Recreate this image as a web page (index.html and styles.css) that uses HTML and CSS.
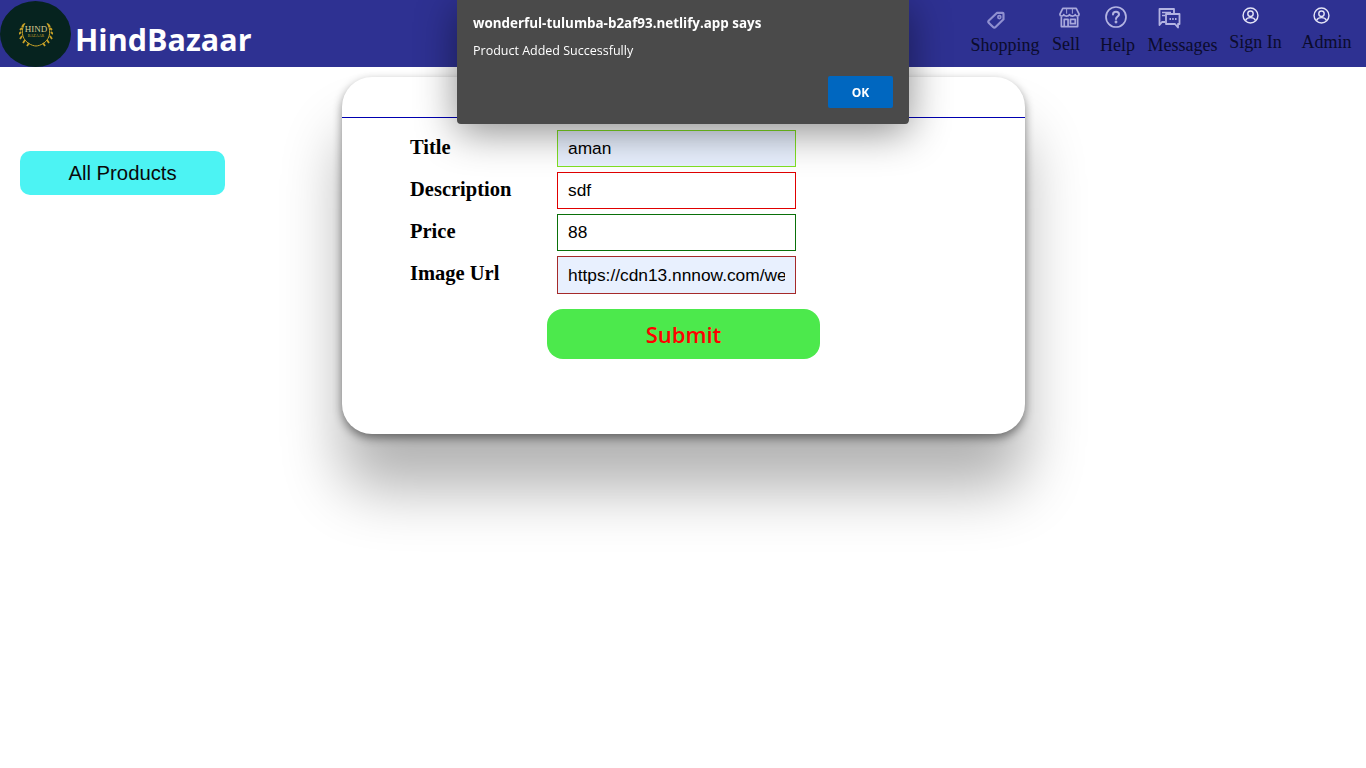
FILE: index.html
```html
<!DOCTYPE html>
<html lang="en">
  <head>
    <meta charset="UTF-8" />
    <meta name="viewport" content="width=device-width, initial-scale=1.0" />
    <title>HindBazaar</title>
    <link rel="stylesheet" href="styles.css">
  </head>
  <body>
    <header class="topbar">
      <a class="brand" href="#">
        <span class="brand-logo">
          <svg class="laurel" viewBox="0 0 34 26" width="34" height="26" fill="none" stroke="#c9a227">
            <path d="M6 2C2 8 2 17 9 22C12 24 15 25 17 25C19 25 22 24 25 22C32 17 32 8 28 2" stroke-width="1" />
            <path d="M5 3L3 6M3 7L1 9M2 11L0 13M3 15L1 18M6 19L4 22M10 22L8 25M29 3L31 6M31 7L33 9M32 11L34 13M31 15L33 18M28 19L30 22M24 22L26 25" stroke-width="1.8" />
            <text class="laurel-big" x="17" y="11" text-anchor="middle">HIND</text>
            <text class="laurel-small" x="17" y="16" text-anchor="middle">BAZAAR</text>
          </svg>
        </span>
        <span class="brand-name">HindBazaar</span>
      </a>
      <nav class="nav">
        <a class="nav-item nav-shopping" href="#">
          <svg viewBox="0 0 24 24" width="20" height="20" fill="none" stroke="currentColor" stroke-width="2.6" stroke-linejoin="round">
            <path d="M13 3.5H20Q21 3.5 21 4.5V11L11.5 20.5Q10 22 8.5 20.5L3.5 15.5Q2 14 3.5 12.5Z" />
            <circle cx="16" cy="8.5" r="1.8" stroke-width="2" />
          </svg>
          <span>Shopping</span>
        </a>
        <a class="nav-item nav-sell" href="#">
          <svg viewBox="0 0 24 24" width="23" height="23" fill="none" stroke="currentColor" stroke-width="1.8" stroke-linejoin="round">
            <path d="M5 2.5H19L22 8.5C22 11 18.5 11 18 9C17.5 11 13 11 12 9C11 11 6.5 11 6 9C5.5 11 2 11 2 8.5Z" />
            <path d="M3.5 11V21.5H20.5V11" />
            <path d="M6.5 21.5V14H10.5V21.5M13 14H18V18.5H13Z" />
            <path d="M9 3V8M15 3V8" stroke-width="1" />
          </svg>
          <span>Sell</span>
        </a>
        <a class="nav-item nav-help" href="#">
          <svg viewBox="0 0 24 24" width="24" height="24" fill="none" stroke="currentColor" stroke-width="1.7" stroke-linecap="round">
            <circle cx="12" cy="12" r="10" />
            <path d="M9 9.5C9 7.5 10.5 6.8 12 6.8C13.7 6.8 15 7.8 15 9.4C15 11.5 12 11.6 12 14" stroke-width="2" />
            <circle cx="12" cy="17" r="0.6" />
          </svg>
          <span>Help</span>
        </a>
        <a class="nav-item nav-messages" href="#">
          <svg viewBox="0 0 24 22" width="24" height="22" fill="none" stroke="currentColor" stroke-width="1.8" stroke-linejoin="round">
            <path d="M8 15H5L2.5 18V2H17V6" />
            <path d="M5 5.5H14M5 8.5H8" stroke-width="1.4" />
            <path d="M9 7H22.5V17H21V20.5L18 17H9Z" />
            <path d="M12.5 12H14M15.2 12H16.7M18 12H19.5" stroke-width="2" />
          </svg>
          <span>Messages</span>
        </a>
        <a class="nav-item nav-signin" href="#">
          <svg viewBox="0 0 24 24" width="17" height="17" fill="none" stroke="currentColor" stroke-width="2">
            <circle cx="12" cy="12" r="10.5" />
            <circle cx="12" cy="9.5" r="3.8" />
            <path d="M5 19C6.5 15.5 9 15 12 15C15 15 17.5 15.5 19 19" />
          </svg>
          <span>Sign In</span>
        </a>
        <a class="nav-item nav-admin" href="#">
          <svg viewBox="0 0 24 24" width="17" height="17" fill="none" stroke="currentColor" stroke-width="2">
            <circle cx="12" cy="12" r="10.5" />
            <circle cx="12" cy="9.5" r="3.8" />
            <path d="M5 19C6.5 15.5 9 15 12 15C15 15 17.5 15.5 19 19" />
          </svg>
          <span>Admin</span>
        </a>
      </nav>
    </header>

    <main class="page">
      <aside class="side">
        <button type="button" class="side-btn">All Products</button>
      </aside>
      <section class="card">
        <hr class="card-line" />
        <form class="product-form" action="">
          <label class="form-label" for="title">Title</label>
          <input class="field field-title" id="title" type="text" value="aman" />
          <label class="form-label" for="description">Description</label>
          <input class="field field-description" id="description" type="text" value="sdf" />
          <label class="form-label" for="price">Price</label>
          <input class="field field-price" id="price" type="text" value="88" />
          <label class="form-label" for="image">Image Url</label>
          <input class="field field-image" id="image" type="text" value="https://cdn13.nnnow.com/web-images/large" />
          <button type="button" class="submit-btn">Submit</button>
        </form>
      </section>
    </main>

    <div class="alert" role="alertdialog">
      <p class="alert-title">wonderful-tulumba-b2af93.netlify.app says</p>
      <p class="alert-text">Product Added Successfully</p>
      <div class="alert-actions">
        <button type="button" class="alert-ok">OK</button>
      </div>
    </div>
  </body>
</html>
```

FILE: styles.css
```css
* {
  box-sizing: border-box;
}
body {
  margin: 0;
  height: 768px;
  overflow: hidden;
  background-color: white;
  font-family: "Liberation Sans", Arial, sans-serif;
}
a {
  color: inherit;
  text-decoration: none;
}

/* header */
.topbar {
  display: flex;
  justify-content: space-between;
  height: 67px;
  padding-right: 14px;
  background-color: #2e3192;
}
.brand {
  display: flex;
  align-items: center;
  gap: 4px;
}
.brand-logo {
  display: flex;
  align-items: center;
  justify-content: center;
  width: 71px;
  height: 66px;
  margin-top: 1px;
  border-radius: 50%;
  background-color: #06231f;
}
.laurel-big {
  font-family: "Liberation Serif", serif;
  font-size: 9px;
  fill: #d8c890;
  stroke: none;
}
.laurel-small {
  font-family: "Liberation Serif", serif;
  font-size: 4px;
  fill: #c9a227;
  stroke: none;
}
.brand-name {
  margin-top: 11px;
  color: white;
  font-family: "Open Sans", sans-serif;
  font-size: 30.5px;
  font-weight: 700;
}
.nav {
  display: flex;
}
.nav-item {
  display: flex;
  flex-direction: column;
  align-items: center;
  color: #0b0b2c;
  font-family: "Liberation Serif", serif;
  font-size: 18px;
  white-space: nowrap;
}
.nav-item svg {
  display: block;
  color: #b4b4e2;
}
.nav-shopping {
  width: 70px;
  padding-top: 10px;
  gap: 5px;
}
.nav-shopping svg {
  margin-left: -18px;
  color: #9090d0;
}
.nav-sell {
  width: 28px;
  margin-left: 12px;
  padding-top: 6px;
  gap: 5px;
}
.nav-sell svg {
  margin-left: 6px;
  color: #a9a9dc;
}
.nav-help {
  width: 37px;
  margin-left: 19px;
  padding-top: 5px;
  gap: 6px;
}
.nav-help svg {
  margin-left: -4px;
}
.nav-messages {
  width: 69px;
  margin-left: 12px;
  padding-top: 7px;
  gap: 6px;
}
.nav-messages svg {
  margin-left: -28px;
}
.nav-signin,
.nav-admin {
  width: 51px;
  padding-top: 7px;
  gap: 8px;
}
.nav-signin {
  margin-left: 13px;
}
.nav-signin svg {
  margin-left: -10px;
  color: #e4e4f6;
}
.nav-admin {
  margin-left: 20px;
}
.nav-admin svg {
  margin-left: -10px;
  color: #e4e4f6;
}

/* page */
.page {
  display: grid;
  grid-template-columns: 342px 683px 1fr;
  padding-top: 10px;
}
.side {
  padding: 74px 0 0 20px;
}
.side-btn {
  display: block;
  width: 205px;
  height: 44px;
  border: none;
  border-radius: 10px;
  background-color: #4cf3f3;
  color: #0a0a0a;
  font-family: inherit;
  font-size: 20.3px;
}
.card {
  height: 357px;
  padding-top: 40px;
  border-radius: 30px;
  background-color: white;
  box-shadow: 0 4px 10px rgba(0, 0, 0, 0.45), 0 55px 60px rgba(0, 0, 0, 0.3);
}
.card-line {
  height: 1px;
  margin: 0;
  border: none;
  background-color: #0000b0;
}
.product-form {
  display: grid;
  grid-template-columns: 147px 239px;
  grid-auto-rows: 37px;
  row-gap: 5px;
  padding: 12px 0 0 68px;
}
.form-label {
  padding-top: 6px;
  font-family: "Liberation Serif", serif;
  font-size: 20.5px;
  font-weight: bold;
}
.field {
  width: 239px;
  height: 37px;
  padding: 0 10px;
  border: 1px solid black;
  border-radius: 0;
  outline: none;
  color: black;
  font-family: inherit;
  font-size: 17.33px;
}
.field-title {
  border-color: #80e022;
  background-color: #e8f0fe;
}
.field-description {
  border-color: #e00000;
}
.field-price {
  border-color: #0a700a;
}
.field-image {
  height: 38px;
  border-color: #a52a2a;
  background-color: #e8f0fe;
}
.submit-btn {
  grid-column: 1 / -1;
  width: 273px;
  height: 50px;
  margin: 11px 0 0 137px;
  border: none;
  border-radius: 16px;
  background-color: #4ce94c;
  color: #ff0000;
  font-family: "Open Sans", sans-serif;
  font-size: 22px;
  font-weight: 600;
}

/* browser alert, lies over the page */
.alert {
  position: fixed;
  top: 0;
  left: 457px;
  width: 452px;
  height: 124px;
  padding: 14px 16px 0;
  border-radius: 0 0 4px 4px;
  background-color: #4a4a4a;
  box-shadow: 0 8px 40px rgba(0, 0, 0, 0.45);
  color: white;
  font-family: "Open Sans", sans-serif;
  font-size: 12.5px;
  line-height: 18px;
}
.alert-title {
  margin: 0;
  font-size: 13.4px;
  font-weight: 700;
}
.alert-text {
  margin: 10px 0 0;
}
.alert-actions {
  display: flex;
  justify-content: flex-end;
  margin-top: 16px;
}
.alert-ok {
  width: 65px;
  height: 32px;
  border: none;
  border-radius: 2px;
  background-color: #0067c0;
  color: white;
  font-family: inherit;
  font-size: 12px;
  font-weight: 700;
}
```
